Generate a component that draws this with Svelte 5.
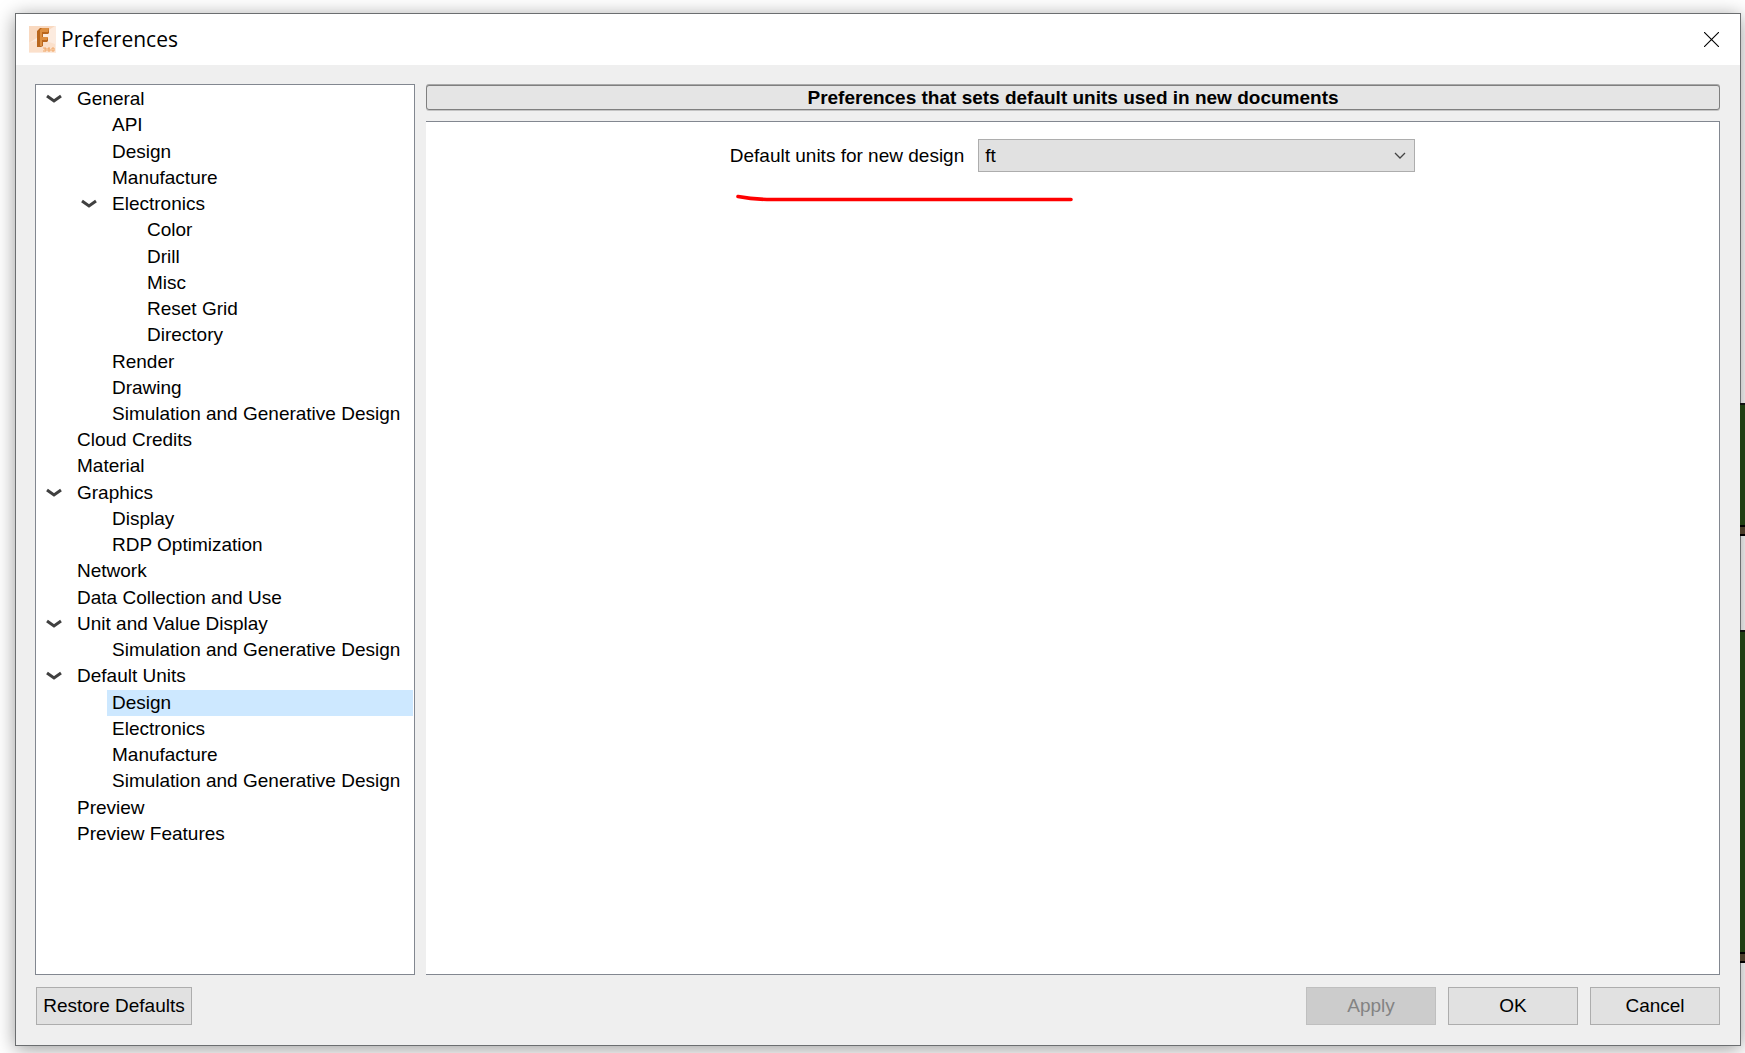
<script lang="ts">
  type Item = { label: string; level: number; open?: boolean };

  const items: Item[] = [
    { label: "General", level: 1, open: true },
    { label: "API", level: 2 },
    { label: "Design", level: 2 },
    { label: "Manufacture", level: 2 },
    { label: "Electronics", level: 2, open: true },
    { label: "Color", level: 3 },
    { label: "Drill", level: 3 },
    { label: "Misc", level: 3 },
    { label: "Reset Grid", level: 3 },
    { label: "Directory", level: 3 },
    { label: "Render", level: 2 },
    { label: "Drawing", level: 2 },
    { label: "Simulation and Generative Design", level: 2 },
    { label: "Cloud Credits", level: 1 },
    { label: "Material", level: 1 },
    { label: "Graphics", level: 1, open: true },
    { label: "Display", level: 2 },
    { label: "RDP Optimization", level: 2 },
    { label: "Network", level: 1 },
    { label: "Data Collection and Use", level: 1 },
    { label: "Unit and Value Display", level: 1, open: true },
    { label: "Simulation and Generative Design", level: 2 },
    { label: "Default Units", level: 1, open: true },
    { label: "Design", level: 2 },
    { label: "Electronics", level: 2 },
    { label: "Manufacture", level: 2 },
    { label: "Simulation and Generative Design", level: 2 },
    { label: "Preview", level: 1 },
    { label: "Preview Features", level: 1 },
  ];

  let selected = $state(23);
  let unit = $state("ft");
</script>

<main class="desktop">
  <section class="window" aria-labelledby="title">
    <header class="titlebar">
      <svg class="logo" viewBox="0 0 27 27" aria-hidden="true">
        <rect width="27" height="27" fill="#fcebdf" />
        <path d="M0 0h26L0 17z" fill="#f9d9c0" />
        <path d="M0 17Q12 12 26 18V26H0z" fill="#fbe0cb" />
        <path d="M8 5l3-3h9v5l-1 1h-5v3h4l1 1v3l-1 1h-4v4l-2 1H8z" fill="#b9661d" />
        <path d="M11 4l2-2h7l-1 4h-6v5h6l-1 3h-5v6h-2z" fill="#dd8f42" />
        <path
          d="M14 22h3v3h-3m1-2h2m4-1h-2v3h2v-2h-2m4-1h2v3h-2z"
          fill="none"
          stroke="#f0a868"
        />
      </svg>
      <h1 id="title">Preferences</h1>
      <button class="close" aria-label="Close">
        <svg viewBox="0 0 15 15" width="15" height="15">
          <path d="M0 0l15 15M15 0L0 15" fill="none" stroke="#000" stroke-width="1.1" />
        </svg>
      </button>
    </header>

    <div class="body">
      <nav class="tree" aria-label="Preference groups">
        <ul>
          {#each items as item, i}
            <li class="level-{item.level}">
              <span class="marker">
                {#if item.open}
                  <svg viewBox="0 0 16 10" width="16" height="10" aria-hidden="true">
                    <path d="M1 2l7 5 7-5" fill="none" stroke="#404040" stroke-width="3" />
                  </svg>
                {/if}
              </span>
              <button
                class="label"
                class:selected={i === selected}
                onclick={() => (selected = i)}>{item.label}</button
              >
            </li>
          {/each}
        </ul>
      </nav>

      <div class="content">
        <h2>Preferences that sets default units used in new documents</h2>
        <div class="panel">
          <div class="setting">
            <label for="unit">Default units for new design</label>
            <div class="select">
              <select id="unit" bind:value={unit}>
                <option>mm</option>
                <option>cm</option>
                <option>m</option>
                <option>in</option>
                <option>ft</option>
              </select>
              <svg viewBox="0 0 12 8" width="12" height="8" aria-hidden="true">
                <path d="M1 1l5 5 5-5" fill="none" stroke="#444" stroke-width="1.3" />
              </svg>
            </div>
            <svg class="stroke" viewBox="0 0 340 8" width="340" height="8" aria-hidden="true">
              <path
                d="M2 2.500Q17 5.500 36 5.500H335"
                fill="none"
                stroke="#f00"
                stroke-width="3.600"
                stroke-linecap="round"
              />
            </svg>
          </div>
        </div>
      </div>
    </div>

    <footer>
      <button class="action restore">Restore Defaults</button>
      <button class="action" disabled>Apply</button>
      <button class="action">OK</button>
      <button class="action">Cancel</button>
    </footer>
  </section>

  <!-- edge of the canvas behind the dialog -->
  <div class="scrap upper"></div>
  <div class="scrap lower"></div>
</main>

<style>
  :global(body) {
    margin: 0;
    background: #fff;
  }
  .desktop {
    position: relative;
    box-sizing: border-box;
    min-height: 100vh;
    padding: 13px 4px 7px 15px;
    display: flex;
    overflow: hidden;
    font-family: "Liberation Sans", Arial, sans-serif;
    font-size: 19px;
    color: #000;
  }
  .window {
    flex: 1;
    display: flex;
    flex-direction: column;
    min-width: 0;
    background: #efefef;
    border: 1px solid #6b6e70;
    box-shadow: 0 3px 18px rgba(0, 0, 0, 0.4);
  }
  .titlebar {
    display: flex;
    align-items: center;
    height: 51px;
    padding: 0 21px 0 13px;
    background: #fff;
  }
  .logo {
    width: 27px;
    height: 27px;
  }
  h1 {
    flex: 1;
    margin: 0;
    padding: 0 0 2px 5px;
    font: 21px/28px "Open Sans", "Noto Sans", sans-serif;
  }
  button {
    font: inherit;
    color: inherit;
  }
  .close {
    display: flex;
    padding: 0;
    border: 0;
    background: none;
  }
  .body {
    flex: 1;
    display: flex;
    gap: 11px;
    padding: 19px 20px 0 19px;
  }
  .tree {
    box-sizing: border-box;
    width: 380px;
    border: 1px solid #828790;
    background: #fff;
  }
  ul {
    display: grid;
    grid-auto-rows: 1fr;
    height: 761px;
    margin: 0;
    padding: 1px 1px 0 0;
    list-style: none;
  }
  li {
    display: flex;
    min-height: 0;
  }
  .level-2 {
    padding-left: 35px;
  }
  .level-3 {
    padding-left: 70px;
  }
  .marker {
    display: flex;
    align-items: center;
    justify-content: center;
    width: 36px;
    flex: none;
  }
  .label {
    flex: 1;
    padding: 0 0 0 5px;
    border: 0;
    background: none;
    line-height: 24px;
    text-align: left;
    white-space: nowrap;
  }
  .selected {
    background: #cde8ff;
  }
  .content {
    flex: 1;
    display: flex;
    flex-direction: column;
    gap: 10px;
  }
  h2 {
    margin: 1px 0;
    border: 1px solid #7f7f7f;
    border-radius: 3px;
    box-shadow:
      0 -1px #a8a8a8,
      0 1px #c4c4c4;
    background: #e5e5e5;
    font-size: 19px;
    line-height: 23px;
    text-align: center;
  }
  .panel {
    flex: 1;
    display: flex;
    justify-content: center;
    align-items: flex-start;
    padding-top: 17px;
    border: 1px solid #828790;
    border-left: 0;
    background: #fff;
  }
  .setting {
    display: grid;
    grid-template-columns: auto 437px;
    align-items: center;
    gap: 22px 14px;
  }
  .select {
    position: relative;
  }
  select {
    display: block;
    width: 100%;
    height: 33px;
    padding: 0 6px;
    border: 1px solid #adadad;
    border-radius: 0;
    background: #e1e1e1;
    appearance: none;
    font: inherit;
    color: inherit;
  }
  .select svg {
    position: absolute;
    right: 9px;
    top: 13px;
    pointer-events: none;
  }
  .stroke {
    grid-column: 1 / -1;
    margin-left: 6px;
  }
  footer {
    display: flex;
    gap: 12px;
    padding: 12px 20px 20px;
  }
  .action {
    box-sizing: border-box;
    width: 130px;
    height: 38px;
    padding: 0;
    border: 1px solid #adadad;
    background: #e1e1e1;
  }
  .restore {
    width: 156px;
    margin-right: auto;
  }
  .action:disabled {
    border-color: #bfbfbf;
    background: #ccc;
    color: #838383;
  }
  .scrap {
    position: absolute;
    right: 0;
    box-sizing: border-box;
    width: 5px;
    border-top: 2px solid #111;
    border-bottom: 2px solid #000;
    background: linear-gradient(0deg, #4a3d29 7px, #000 7px, #000 9px, #213f13 9px);
  }
  .upper {
    top: 403px;
    height: 133px;
  }
  .lower {
    top: 630px;
    height: 333px;
  }
</style>
